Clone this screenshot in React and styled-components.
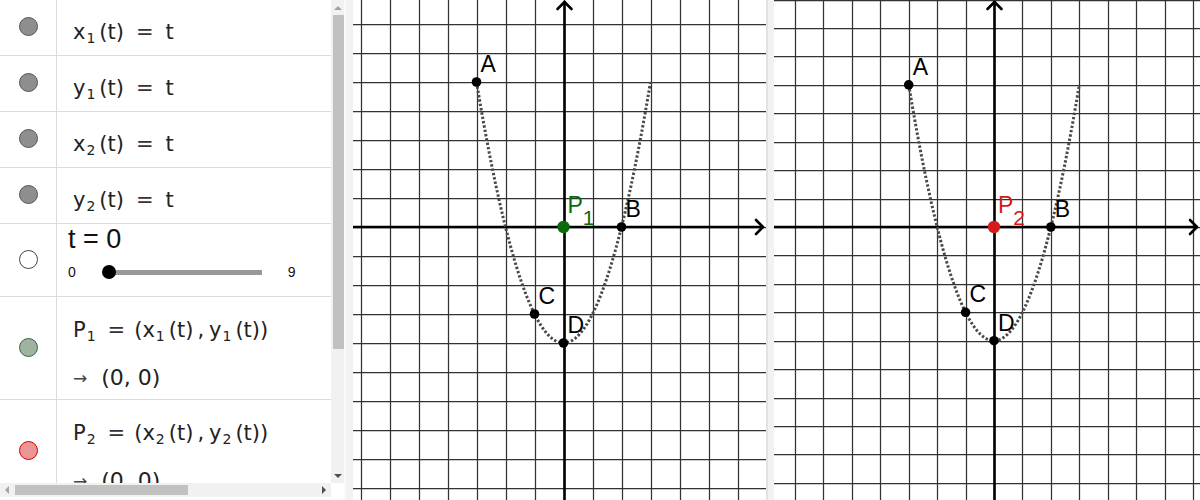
import styled, { createGlobalStyle } from "styled-components";

//------------------------------------  STYLES  ------------------------------------//
const GlobalStyle = createGlobalStyle`
    html, body {
        margin: 0;
        padding: 0;
        background: #ffffff;
    }
    body {
        width: 1200px;
        height: 500px;
        overflow: hidden;
        font-family: "DejaVu Sans", "Liberation Sans", sans-serif;
        color: #222222;
    }
`;

const Page = styled.div`
    display: flex;
    width: 1200px;
    height: 500px;
    overflow: hidden;
    background: #ffffff;
`;

const AlgebraPanel = styled.div`
    flex-shrink: 0;
    width: 344px;
    height: 500px;
    display: grid;
    grid-template-columns: 331px 13px;
    grid-template-rows: 483px 14px 3px;
    background: #ffffff;
`;

const AlgebraList = styled.div`
    overflow: hidden;
    display: flex;
    flex-direction: column;
`;

const Row = styled.div`
    flex-shrink: 0;
    box-sizing: border-box;
    height: ${(p) => p.$h}px;
    display: flex;
    border-bottom: 1px solid #dcdcdc;
`;

const MarbleCell = styled.div`
    flex-shrink: 0;
    width: 57px;
    box-sizing: border-box;
    border-right: 1px solid #dcdcdc;
    display: flex;
    align-items: center;
    justify-content: center;
`;

const Marble = styled.div`
    width: 19px;
    height: 19px;
    box-sizing: border-box;
    border-radius: 50%;
    background: ${(p) => p.$fill};
    border: 1px solid ${(p) => p.$stroke};
    margin-top: -2px;
`;

const Content = styled.div`
    flex: 1;
    padding: ${(p) => p.$top}px 0 0 ${(p) => p.$left}px;
    display: flex;
    flex-direction: column;
    white-space: nowrap;
`;

const MathLine = styled.div`
    font-family: "DejaVu Sans", sans-serif;
    font-size: 21px;
    line-height: 24px;
    color: #222222;
    display: flex;
    align-items: baseline;
`;

const Sub = styled.span`
    font-size: 14px;
    position: relative;
    top: 4px;
    margin: 0 ${(p) => p.$after ?? 4}px 0 1px;
`;

const Eq = styled.span`
    margin: 0 ${(p) => p.$gap}px;
    color: #333333;
`;

const Comma = styled.span`
    margin: 0 5px 0 4px;
`;

const ValueLine = styled.div`
    margin-top: 22px;
    font-family: "DejaVu Sans", sans-serif;
    font-size: 22px;
    line-height: 24px;
    display: flex;
    align-items: center;
`;

const Arrow = styled.span`
    font-size: 17px;
    color: #444444;
    margin-right: 14px;
`;

const SliderCaption = styled.div`
    font-family: "Liberation Sans", Arial, sans-serif;
    font-size: 27px;
    line-height: 30px;
    color: #111111;
`;

const SliderLine = styled.div`
    margin-top: 10px;
    display: flex;
    align-items: center;
    font-family: "Liberation Sans", Arial, sans-serif;
    font-size: 14px;
    color: #111111;
`;

const SliderTrack = styled.div`
    width: 160px;
    height: 14px;
    margin: 0 26px 0 26px;
    display: flex;
    align-items: center;
    background: linear-gradient(#999999, #999999) no-repeat;
    background-size: 153px 5px;
    background-position: 7px center;
`;

const SliderThumb = styled.div`
    width: 14px;
    height: 14px;
    border-radius: 50%;
    background: #000000;
`;

const VScroll = styled.div`
    background: #f1f1f1;
    display: flex;
    flex-direction: column;
`;

const HScroll = styled.div`
    background: #f1f1f1;
    display: flex;
    align-items: center;
`;

const ArrowBox = styled.div`
    flex-shrink: 0;
    width: ${(p) => p.$w}px;
    height: ${(p) => p.$h}px;
    display: flex;
    align-items: center;
    justify-content: center;
`;

const Tri = styled.div`
    width: 0;
    height: 0;
    border-style: solid;
    border-color: transparent;
    ${(p) =>
        p.$dir === "up"
            ? `border-width: 0 4px 4px 4px; border-bottom-color: ${p.$color};`
            : p.$dir === "down"
            ? `border-width: 4px 4px 0 4px; border-top-color: ${p.$color};`
            : p.$dir === "left"
            ? `border-width: 4px 4px 4px 0; border-right-color: ${p.$color};`
            : `border-width: 4px 0 4px 4px; border-left-color: ${p.$color};`}
`;

const VThumb = styled.div`
    width: 11px;
    height: 334px;
    margin-left: 2px;
    background: #c1c1c1;
`;

const HThumb = styled.div`
    width: 173px;
    height: 10px;
    margin-left: 1px;
    background: #c1c1c1;
`;

const Spacer = styled.div`
    flex: 1;
`;

const Corner = styled.div`
    background: #ffffff;
`;

const Splitter = styled.div`
    flex-shrink: 0;
    width: ${(p) => p.$w}px;
    height: 500px;
    box-sizing: border-box;
    background: #f2f2f2;
    border-left: 2px solid ${(p) => p.$edge};
`;

const GraphPanel = styled.div`
    flex-shrink: 0;
    width: ${(p) => p.$w}px;
    height: 500px;
    overflow: hidden;
    background: #ffffff;
    svg {
        display: block;
    }
`;

//------------------------------------  DATA  ------------------------------------//
const funcRows = [
    { v: "x", n: "1" },
    { v: "y", n: "1" },
    { v: "x", n: "2" },
    { v: "y", n: "2" },
];

const points = [
    { n: "A", x: -3, y: 5 },
    { n: "B", x: 2, y: 0 },
    { n: "C", x: -1, y: -3 },
    { n: "D", x: 0, y: -4 },
];

//------------------------------------  COMPONENTS  ------------------------------------//
const Graph = ({ width, ox, oy, scale, color, idx }) => {
    const px = (x) => ox + x * scale;
    const py = (y) => oy - y * scale;

    const vLines = [];
    for (let k = -Math.floor(ox / scale); px(k) <= width + 1; k++) vLines.push(Math.round(px(k)) + 0.5);
    const hLines = [];
    for (let k = -Math.floor((oy + 1) / scale); oy + k * scale <= 501; k++)
        hLines.push(Math.round(oy + k * scale) + 0.5);

    const curve = [];
    for (let i = 0; i <= 150; i++) {
        const x = -3 + i * 0.04;
        curve.push(`${px(x).toFixed(2)},${py(x * x - 4).toFixed(2)}`);
    }

    const ax = Math.round(ox) + 0.5;
    const ay = Math.round(oy);
    const tipX = width - 3;

    return (
        <svg width={width} height={500} viewBox={`0 0 ${width} 500`}>
            <g stroke="#333" strokeWidth="1.25">
                {vLines.map((x) => (
                    <line key={`v${x}`} x1={x} y1={0} x2={x} y2={500} />
                ))}
                {hLines.map((y) => (
                    <line key={`h${y}`} x1={0} y1={y} x2={width} y2={y} />
                ))}
            </g>
            <g stroke="#000" strokeWidth="2.6" fill="none" strokeLinecap="round" strokeLinejoin="round">
                <line x1={0} y1={ay} x2={tipX} y2={ay} />
                <line x1={ax} y1={2} x2={ax} y2={500} />
                <polyline points={`${tipX - 7},${ay - 7} ${tipX},${ay} ${tipX - 7},${ay + 7}`} />
                <polyline points={`${ax - 7},9 ${ax},2 ${ax + 7},9`} />
            </g>
            <polyline
                points={curve.join(" ")}
                fill="none"
                stroke="#4a4a4a"
                strokeWidth="3"
                strokeDasharray="2.4 2"
            />
            {points.map((p) => (
                <g key={p.n}>
                    <circle cx={px(p.x)} cy={py(p.y)} r="4.8" fill="#000" />
                    <text
                        x={px(p.x) + 4}
                        y={py(p.y) - 10}
                        fontFamily="Liberation Sans, Arial, sans-serif"
                        fontSize="23"
                        fill="#000"
                    >
                        {p.n}
                    </text>
                </g>
            ))}
            <circle cx={px(0)} cy={py(0)} r="6.2" fill={color} />
            <text x={px(0) + 4} y={py(0) - 14} fontFamily="Liberation Sans, Arial, sans-serif" fontSize="23" fill={color}>
                P
                <tspan fontSize="21" dy="11.5">
                    {idx}
                </tspan>
            </text>
        </svg>
    );
};

const PointRow = ({ n, fill, stroke }) => (
    <Row $h={103}>
        <MarbleCell>
            <Marble $fill={fill} $stroke={stroke} />
        </MarbleCell>
        <Content $top={21} $left={16}>
            <MathLine>
                P<Sub $after={3}>{n}</Sub>
                <Eq $gap={9}>=</Eq>(x<Sub>{n}</Sub>(t)<Comma>,</Comma>y<Sub>{n}</Sub>(t))
            </MathLine>
            <ValueLine>
                <Arrow>→</Arrow>(0, 0)
            </ValueLine>
        </Content>
    </Row>
);

const App = () => {
    return (
        <>
            <GlobalStyle />
            <Page>
                <AlgebraPanel>
                    <AlgebraList>
                        {funcRows.map((r, i) => (
                            <Row key={i} $h={56}>
                                <MarbleCell>
                                    <Marble $fill="#8e8e8e" $stroke="#555555" />
                                </MarbleCell>
                                <Content $top={20} $left={16}>
                                    <MathLine>
                                        {r.v}
                                        <Sub>{r.n}</Sub>(t)<Eq $gap={12}>=</Eq>t
                                    </MathLine>
                                </Content>
                            </Row>
                        ))}
                        <Row $h={73}>
                            <MarbleCell>
                                <Marble $fill="#ffffff" $stroke="#444444" />
                            </MarbleCell>
                            <Content $top={0} $left={11}>
                                <SliderCaption>t = 0</SliderCaption>
                                <SliderLine>
                                    0
                                    <SliderTrack>
                                        <SliderThumb />
                                    </SliderTrack>
                                    9
                                </SliderLine>
                            </Content>
                        </Row>
                        <PointRow n="1" fill="#a2b2a2" stroke="#2e6e2e" />
                        <PointRow n="2" fill="#ea9696" stroke="#d40000" />
                    </AlgebraList>
                    <VScroll>
                        <ArrowBox $w={13} $h={15}>
                            <Tri $dir="up" $color="#a3a3a3" />
                        </ArrowBox>
                        <VThumb />
                        <Spacer />
                        <ArrowBox $w={13} $h={15}>
                            <Tri $dir="down" $color="#505050" />
                        </ArrowBox>
                    </VScroll>
                    <HScroll>
                        <ArrowBox $w={14} $h={14}>
                            <Tri $dir="left" $color="#a3a3a3" />
                        </ArrowBox>
                        <HThumb />
                        <Spacer />
                        <ArrowBox $w={14} $h={14}>
                            <Tri $dir="right" $color="#505050" />
                        </ArrowBox>
                    </HScroll>
                    <Corner />
                    <Corner />
                    <Corner />
                </AlgebraPanel>
                <Splitter $w={9} $edge="#fafafa" />
                <GraphPanel $w={413}>
                    <Graph width={413} ox={210.5} oy={227} scale={29} color="#0b6a0b" idx="1" />
                </GraphPanel>
                <Splitter $w={8} $edge="#e2e2e2" />
                <GraphPanel $w={426}>
                    <Graph width={426} ox={220} oy={227} scale={28.43} color="#d41a1a" idx="2" />
                </GraphPanel>
            </Page>
        </>
    );
};

export default App;
